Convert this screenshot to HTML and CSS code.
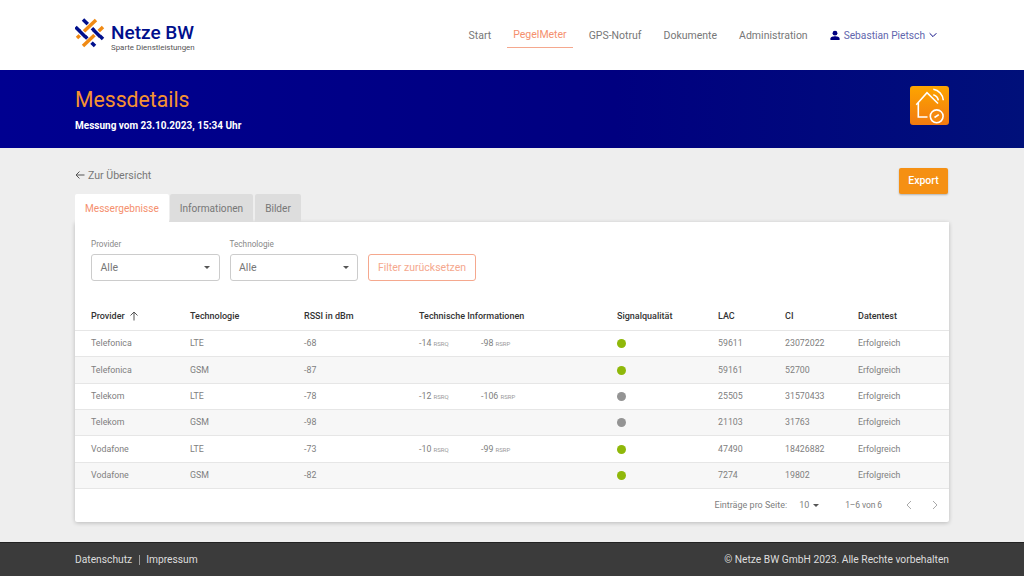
FILE: index.html
```html
<!DOCTYPE html>
<html lang="de">
<head>
<meta charset="utf-8">
<title>Messdetails</title>
<link rel="stylesheet" href="styles.css">
</head>
<body>
<header class="topbar">
  <div class="wrap topbar-inner">
    <div class="logo">
      <svg class="logo-mark" width="30" height="30" viewBox="0 0 30 30" fill="none" stroke-width="3.5">
        <path d="M8 1.5 L28 21 M0.5 9 L20 28" stroke="#000f8c"/>
        <path d="M17 6 L12 11 M16.5 20.5 L12 25" stroke="#fff" stroke-width="6"/>
        <path d="M21 2 L2 20 M28 9 L8 28" stroke="#f08a14"/>
        <path d="M4.5 13 L10 18.5 M19 12.5 L24.5 18" stroke="#fff" stroke-width="6"/>
        <path d="M4 12.5 L10.5 19 M18.5 12 L25 18.5" stroke="#000f8c"/>
      </svg>
      <div class="logo-text">
        <div class="logo-name">Netze BW</div>
        <div class="logo-sub">Sparte Dienstleistungen</div>
      </div>
    </div>
    <nav class="nav">
      <a class="nav-item">Start</a>
      <a class="nav-item active">PegelMeter</a>
      <a class="nav-item">GPS-Notruf</a>
      <a class="nav-item">Dokumente</a>
      <a class="nav-item">Administration</a>
      <a class="nav-item user">
        <svg width="10" height="11" viewBox="0 0 12 12"><circle cx="6" cy="3.2" r="2.9" fill="#000080"/><path d="M0.5 11.5 V9.6 C0.5 7.8 4 7 6 7 S11.5 7.8 11.5 9.6 V11.5 Z" fill="#000080"/></svg>
        <span>Sebastian Pietsch</span>
        <svg width="8" height="8" viewBox="0 0 10 10"><path d="M0.8 2.8 L5 7 L9.2 2.8" fill="none" stroke="#000080" stroke-width="1.2"/></svg>
      </a>
    </nav>
  </div>
</header>

<section class="band">
  <div class="wrap band-inner">
    <div>
      <h1 class="band-title">Messdetails</h1>
      <div class="band-sub">Messung vom 23.10.2023, 15:34 Uhr</div>
    </div>
    <div class="band-icon">
      <svg width="39" height="39" viewBox="0 0 39 39" fill="none" stroke="#fff" stroke-width="1.6">
        <path d="M6.3 18.7 L17 6.7 L28 17.5"/>
        <path d="M8.3 17 V31 H17.5"/>
        <path d="M23.3 8.7 A7 7 0 0 1 28.3 14.3"/>
        <path d="M23.3 3.3 A12 12 0 0 1 33.3 14.3"/>
        <circle cx="26.7" cy="30.3" r="6.4" fill="#f58a10"/>
        <path d="M24.5 31.5 L28.8 28.6" stroke-width="1.7"/>
      </svg>
    </div>
  </div>
</section>

<main class="wrap main">
  <div class="toolbar">
    <a class="back">
      <svg width="10" height="10" viewBox="0 0 10 10"><path d="M9.5 5 H1 M4.5 1.5 L1 5 L4.5 8.5" fill="none" stroke="#555" stroke-width="1"/></svg>
      <span>Zur Übersicht</span>
    </a>
    <button class="export">Export</button>
  </div>
  <div class="tabs">
    <div class="tab current">Messergebnisse</div>
    <div class="tab">Informationen</div>
    <div class="tab">Bilder</div>
  </div>
  <div class="card">
    <div class="filters">
      <div class="field">
        <label class="field-label">Provider</label>
        <div class="select"><span>Alle</span><i class="caret"></i></div>
      </div>
      <div class="field">
        <label class="field-label">Technologie</label>
        <div class="select"><span>Alle</span><i class="caret"></i></div>
      </div>
      <button class="reset">Filter zurücksetzen</button>
    </div>
    <div class="grid head">
      <div class="sort">Provider <svg width="10" height="10" viewBox="0 0 10 10"><path d="M5 9.5 V1 M1.5 4.5 L5 1 L8.5 4.5" fill="none" stroke="#555" stroke-width="1"/></svg></div>
      <div>Technologie</div><div>RSSI in dBm</div><div>Technische Informationen</div><div>Signalqualität</div><div>LAC</div><div>CI</div><div>Datentest</div>
    </div>
    <div class="grid row">
      <div>Telefonica</div><div>LTE</div><div>-68</div>
      <div class="tech"><span class="m1">-14 <small>RSRQ</small></span><span>-98 <small>RSRP</small></span></div>
      <div><i class="dot ok"></i></div><div>59611</div><div>23072022</div><div>Erfolgreich</div>
    </div>
    <div class="grid row alt">
      <div>Telefonica</div><div>GSM</div><div>-87</div><div></div>
      <div><i class="dot ok"></i></div><div>59161</div><div>52700</div><div>Erfolgreich</div>
    </div>
    <div class="grid row">
      <div>Telekom</div><div>LTE</div><div>-78</div>
      <div class="tech"><span class="m1">-12 <small>RSRQ</small></span><span>-106 <small>RSRP</small></span></div>
      <div><i class="dot na"></i></div><div>25505</div><div>31570433</div><div>Erfolgreich</div>
    </div>
    <div class="grid row alt">
      <div>Telekom</div><div>GSM</div><div>-98</div><div></div>
      <div><i class="dot na"></i></div><div>21103</div><div>31763</div><div>Erfolgreich</div>
    </div>
    <div class="grid row">
      <div>Vodafone</div><div>LTE</div><div>-73</div>
      <div class="tech"><span class="m1">-10 <small>RSRQ</small></span><span>-99 <small>RSRP</small></span></div>
      <div><i class="dot ok"></i></div><div>47490</div><div>18426882</div><div>Erfolgreich</div>
    </div>
    <div class="grid row alt">
      <div>Vodafone</div><div>GSM</div><div>-82</div><div></div>
      <div><i class="dot ok"></i></div><div>7274</div><div>19802</div><div>Erfolgreich</div>
    </div>
    <div class="pager">
      <span class="per-label">Einträge pro Seite:</span>
      <span class="per">10 <i class="caret"></i></span>
      <span class="count">1–6 von 6</span>
      <svg width="8" height="10" viewBox="0 0 8 10"><path d="M6 1 L2 5 L6 9" fill="none" stroke="#aaa" stroke-width="1"/></svg>
      <svg class="next" width="8" height="10" viewBox="0 0 8 10"><path d="M2 1 L6 5 L2 9" fill="none" stroke="#aaa" stroke-width="1"/></svg>
    </div>
  </div>
</main>

<footer class="footer">
  <div class="wrap footer-inner">
    <div class="foot-links"><a>Datenschutz</a><i class="sep"></i><a>Impressum</a></div>
    <div>© Netze BW GmbH 2023. Alle Rechte vorbehalten</div>
  </div>
</footer>
</body>
</html>
```
FILE: styles.css
```css
* { box-sizing: border-box; }
html, body { height: 100%; }
body {
  margin: 0;
  height: 576px;
  overflow: hidden;
  display: flex;
  flex-direction: column;
  background: #eeeeee;
  color: #666;
  font-family: "Roboto", "Liberation Sans", sans-serif;
  font-size: 11px;
}
.wrap { width: 874px; margin: 0 auto; }

.topbar { height: 70px; background: #fff; flex: none; }
.topbar-inner { height: 100%; display: flex; align-items: center; justify-content: space-between; }
.logo { display: flex; align-items: center; gap: 6px; margin-top: -4px; }
.logo-mark { display: block; }
.logo-text { padding-top: 9px; }
.logo-name { font-size: 19px; font-weight: 500; color: #000f8c; line-height: 20px; }
.logo-sub { font-size: 7.9px; color: #555; line-height: 9px; }

.nav { display: flex; align-items: center; gap: 10px; margin-right: 10px; }
.nav-item { display: flex; align-items: center; gap: 4px; padding: 0 6px; height: 26px; font-size: 10.5px; color: #777; }
.nav-item.active { color: #f5906e; border-bottom: 1px solid #f5a88e; }
.nav-item.user { color: #6166ad; padding-right: 2px; font-size: 10.2px; }

.band {
  height: 78px; flex: none;
  background: linear-gradient(90deg, #000090, #000080 60%, #00107a);
}
.band-inner { height: 100%; display: flex; justify-content: space-between; padding-top: 16px; }
.band-title { margin: 0; font-size: 21.2px; line-height: 27px; font-weight: 400; color: #f59331; }
.band-sub { margin-top: 6px; font-size: 10px; font-weight: 700; line-height: 13px; color: #fff; }
.band-icon {
  width: 39px; height: 39px; border-radius: 3px;
  background: linear-gradient(180deg, #fda500, #f27a10);
}
.band-icon svg { display: block; }

.main { flex: 1; }
.toolbar { display: flex; justify-content: space-between; align-items: center; padding-top: 19px; height: 46px; }
.back { display: flex; align-items: center; gap: 3px; font-size: 10.6px; color: #777; margin-top: -11px; }
.export {
  width: 49px; height: 26px; border: 0; border-radius: 2px; padding: 0; margin-right: 1px;
  background: #f59013; color: #fff; font: 500 10.5px "Roboto", sans-serif;
  box-shadow: 0 1px 2px rgba(0,0,0,.25);
}
.tabs { display: flex; gap: 1px; height: 28px; }
.tab { display: flex; align-items: center; justify-content: center; padding: 0 10px; background: #ddd; color: #777; font-size: 10.1px; border-radius: 2px 2px 0 0; }
.tab:last-child { margin-left: 1px; }
.tab.current { background: #fff; color: #f5906e; }

.card { background: #fff; height: 300px; box-shadow: 0 1px 4px rgba(0,0,0,.22); border-radius: 0 0 2px 2px; }
.filters { display: flex; align-items: flex-start; gap: 10px; padding: 17px 16px 0; height: 80px; }
.field { width: 128.5px; }
.field-label { display: block; font-size: 8.2px; line-height: 10px; color: #888; margin-bottom: 5px; }
.select {
  display: flex; align-items: center; justify-content: space-between;
  height: 27px; padding: 0 8.5px; border: 1px solid #ccc; border-radius: 3px;
  font-size: 10.5px; color: #777;
}
.caret { display: inline-block; width: 0; height: 0; border: 3.5px solid transparent; border-top: 3.5px solid #555; border-bottom: 0; }
.reset {
  width: 108px; height: 27px; margin-top: 15px; padding: 0;
  background: #fff; border: 1px solid #f5a88e; border-radius: 3px;
  color: #f5a88e; font: 400 10.5px "Roboto", sans-serif;
}

.grid { display: grid; grid-template-columns: 99px 114px 115px 198px 101px 67px 73px 91px; padding-left: 16px; align-items: center; border-bottom: 1px solid #e6e6e6; }
.head { height: 29px; font-size: 9px; font-weight: 500; color: #333; padding-bottom: 1px; }
.sort { display: flex; align-items: center; gap: 4px; }
.row { height: 26.33px; padding-top: .6px; font-size: 8.8px; line-height: 9px; color: #808080; }
.alt { background: #f7f7f7; }
.tech { display: flex; }
.m1 { width: 62px; flex: none; }
small { font-size: 6px; color: #999; }
.dot { display: block; width: 9px; height: 9px; border-radius: 50%; }
.ok { background: #8fb80a; }
.na { background: #949494; }

.pager { display: flex; align-items: center; justify-content: flex-end; height: 33px; padding-right: 10px; font-size: 9px; color: #808080; }
.per { display: flex; align-items: center; gap: 4px; margin-left: 12px; width: 46px; }
.count { margin-right: 23px; font-size: 8.5px; letter-spacing: -.1px; }
.next { margin-left: 18px; }

.footer { height: 34px; flex: none; background: #3b3b3b; border-top: 1px solid #222; color: #ddd; font-size: 10.25px; }
.footer-inner { height: 100%; display: flex; align-items: center; justify-content: space-between; }
.foot-links { display: flex; align-items: center; }
.sep { width: 1px; height: 10px; background: #999; margin: 0 6.5px; }
```
